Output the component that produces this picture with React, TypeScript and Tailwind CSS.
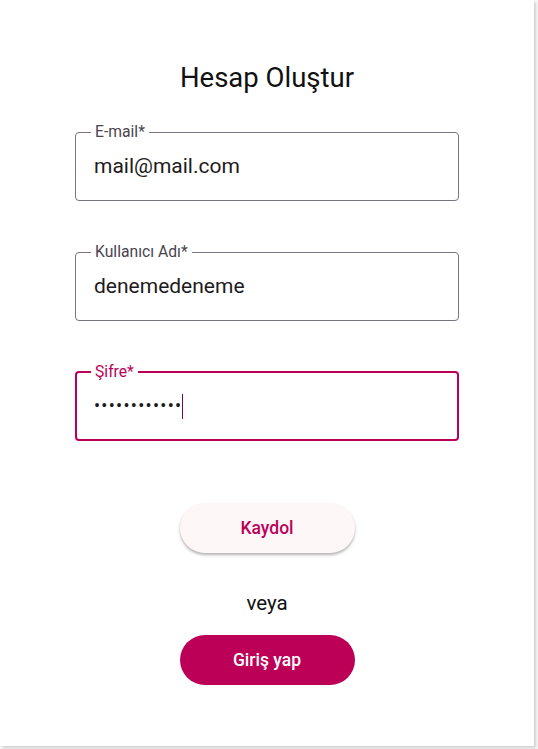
export default function App() {
  return (
    <div className="min-h-screen bg-[#fafafa] font-['Roboto',sans-serif]">
      <div className="w-[534px] h-[746px] bg-white shadow-[2px_2px_3px_rgba(0,0,0,0.18)] px-[75px] pt-[62px] flex flex-col">
        <h1 className="text-[27.5px] leading-[32px] text-[#111] text-center">Hesap Oluştur</h1>

        {/* E-mail */}
        <fieldset className="mt-[30px] border border-[#79747e] rounded-[4px] pl-[18px] pr-4 pt-[12px] pb-[20px]">
          <legend className="ml-[-3px] px-[4px] text-[15.7px] leading-[16px] text-[#49454f]">E-mail*</legend>
          <div className="text-[21px] leading-[28px] text-[#1d1b20]">mail@mail.com</div>
        </fieldset>

        {/* Kullanıcı Adı */}
        <fieldset className="mt-[43px] border border-[#79747e] rounded-[4px] pl-[18px] pr-4 pt-[12px] pb-[20px]">
          <legend className="ml-[-3px] px-[4px] text-[15.7px] leading-[16px] text-[#49454f]">Kullanıcı Adı*</legend>
          <div className="text-[21px] leading-[28px] text-[#1d1b20]">denemedeneme</div>
        </fieldset>

        {/* Şifre (focused) */}
        <fieldset className="mt-[43px] border-2 border-[#bc0058] rounded-[4px] pl-[17px] pr-4 pt-[12px] pb-[19px]">
          <legend className="ml-[-3px] px-[4px] text-[15.7px] leading-[16px] text-[#bc0058]">Şifre*</legend>
          <div className="flex items-center h-[28px] text-[#1d1b20]">
            <span className="text-[18px] tracking-[1.3px] leading-[28px]">••••••••••••</span>
            <span className="ml-[0px] w-px h-[25px] bg-[#7a0a45]" />
          </div>
        </fieldset>

        <div className="flex flex-col items-center mt-[62px]">
          <button className="w-[175px] h-[50px] rounded-full bg-[#fdf7f8] shadow-[0_2px_3px_rgba(0,0,0,0.3)] text-[#bc0058] text-[17.5px] font-medium">
            Kaydol
          </button>
          <div className="mt-[38px] text-[20.5px] leading-[24px] text-[#111]">veya</div>
          <button className="mt-[20px] w-[175px] h-[50px] rounded-full bg-[#bc0058] text-white text-[17.5px] font-medium">
            Giriş yap
          </button>
        </div>
      </div>
    </div>
  );
}
